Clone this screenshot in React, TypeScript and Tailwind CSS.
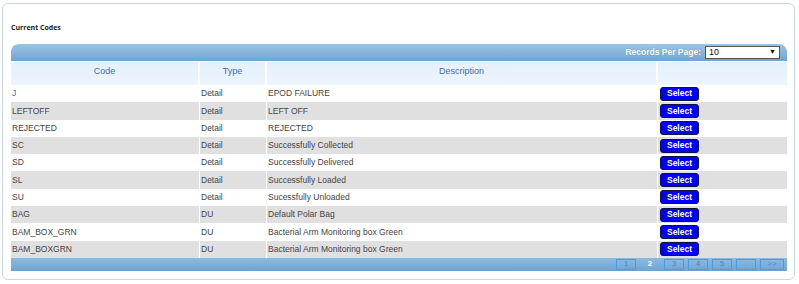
import React from 'react'

type Row = { code: string; type: string; desc: string }

const rows: Row[] = [
  { code: 'J', type: 'Detail', desc: 'EPOD FAILURE' },
  { code: 'LEFTOFF', type: 'Detail', desc: 'LEFT OFF' },
  { code: 'REJECTED', type: 'Detail', desc: 'REJECTED' },
  { code: 'SC', type: 'Detail', desc: 'Successfully Collected' },
  { code: 'SD', type: 'Detail', desc: 'Successfully Delivered' },
  { code: 'SL', type: 'Detail', desc: 'Successfully Loaded' },
  { code: 'SU', type: 'Detail', desc: 'Sucessfully Unloaded' },
  { code: 'BAG', type: 'DU', desc: 'Default Polar Bag' },
  { code: 'BAM_BOX_GRN', type: 'DU', desc: 'Bacterial Arm Monitoring box Green' },
  { code: 'BAM_BOXGRN', type: 'DU', desc: 'Bacterial Arm Monitoring box Green' },
]

const cols = 'grid grid-cols-[189px_67px_391px_129px]'

export default function App() {
  return (
    <div className="w-[799px] h-[284px] bg-white pt-[3px] pl-[2px] pr-[4px] pb-[4px] font-['Liberation_Sans',Arial,sans-serif] text-[8.5px] text-[#444]">
      <div className="h-full border border-[#c6d6e8] rounded-[6px] px-[8px] pt-[19px]">
        <div className="h-[21px] font-['Open_Sans',sans-serif] font-bold text-[7px] text-[#222] leading-[10px]">
          Current Codes
        </div>

        <div className="w-[776px]">
          <div className="h-[17px] rounded-t-[8px] bg-gradient-to-b from-[#9cc4e4] via-[#86b5dc] to-[#6fa4d1] flex items-center justify-end pr-[7px] gap-[4px]">
            <span className="font-bold text-white text-[8.5px] [text-shadow:0_0_1px_#5b8cbb]">Records Per Page:</span>
            <div className="w-[75px] h-[13px] bg-white border border-[#555] flex items-center justify-between px-[3px] text-[#111] text-[9px]">
              <span>10</span>
              <span className="text-[7px]">▼</span>
            </div>
          </div>

          <div className={`${cols} h-[24px] bg-gradient-to-b from-[#e4f0fb] to-[#edf5fd] text-[#3f6fae] text-[9px] border-t border-white`}>
            <div className="border-r-2 border-white text-center pt-[3px]">Code</div>
            <div className="border-r-2 border-white text-center pt-[3px]">Type</div>
            <div className="border-r-2 border-white text-center pt-[3px]">Description</div>
            <div></div>
          </div>

          {rows.map((r, i) => (
            <div
              key={r.code}
              className={`${cols} h-[17.3px] items-center ${i % 2 === 1 ? 'bg-[#e0e0e0]' : 'bg-white'}`}
            >
              <div className={`pl-[1px] border-r border-white h-full flex items-center ${i === 0 ? 'text-[#3f6fae]' : ''}`}>
                {r.code}
              </div>
              <div className="pl-[1px] border-r border-white h-full flex items-center">{r.type}</div>
              <div className="pl-[1px] border-r border-white h-full flex items-center">{r.desc}</div>
              <div className="pl-[2px] h-full flex items-center">
                <button className="w-[39px] h-[14px] rounded-[3px] border border-[#10104a] bg-[#0000f5] text-white font-bold text-[8.5px] leading-none">
                  Select
                </button>
              </div>
            </div>
          ))}

          <div className="h-[13px] bg-gradient-to-b from-[#8dbbe0] to-[#6fa4d1] flex items-center justify-end gap-[4px] pr-[3px] text-[8px] text-[#4f86bf]">
            <span className="w-[20px] h-[11px] border border-[#5299d6] flex items-center justify-center">1</span>
            <span className="w-[20px] h-[11px] flex items-center justify-center text-white font-bold">2</span>
            <span className="w-[20px] h-[11px] border border-[#5299d6] flex items-center justify-center">3</span>
            <span className="w-[20px] h-[11px] border border-[#5299d6] flex items-center justify-center">4</span>
            <span className="w-[20px] h-[11px] border border-[#5299d6] flex items-center justify-center">5</span>
            <span className="w-[20px] h-[11px] border border-[#5299d6] flex items-center justify-center text-[#6fa0d0]">...</span>
            <span className="w-[24px] h-[11px] border border-[#5299d6] flex items-center justify-center">&gt;&gt;</span>
          </div>
        </div>
      </div>
    </div>
  )
}
